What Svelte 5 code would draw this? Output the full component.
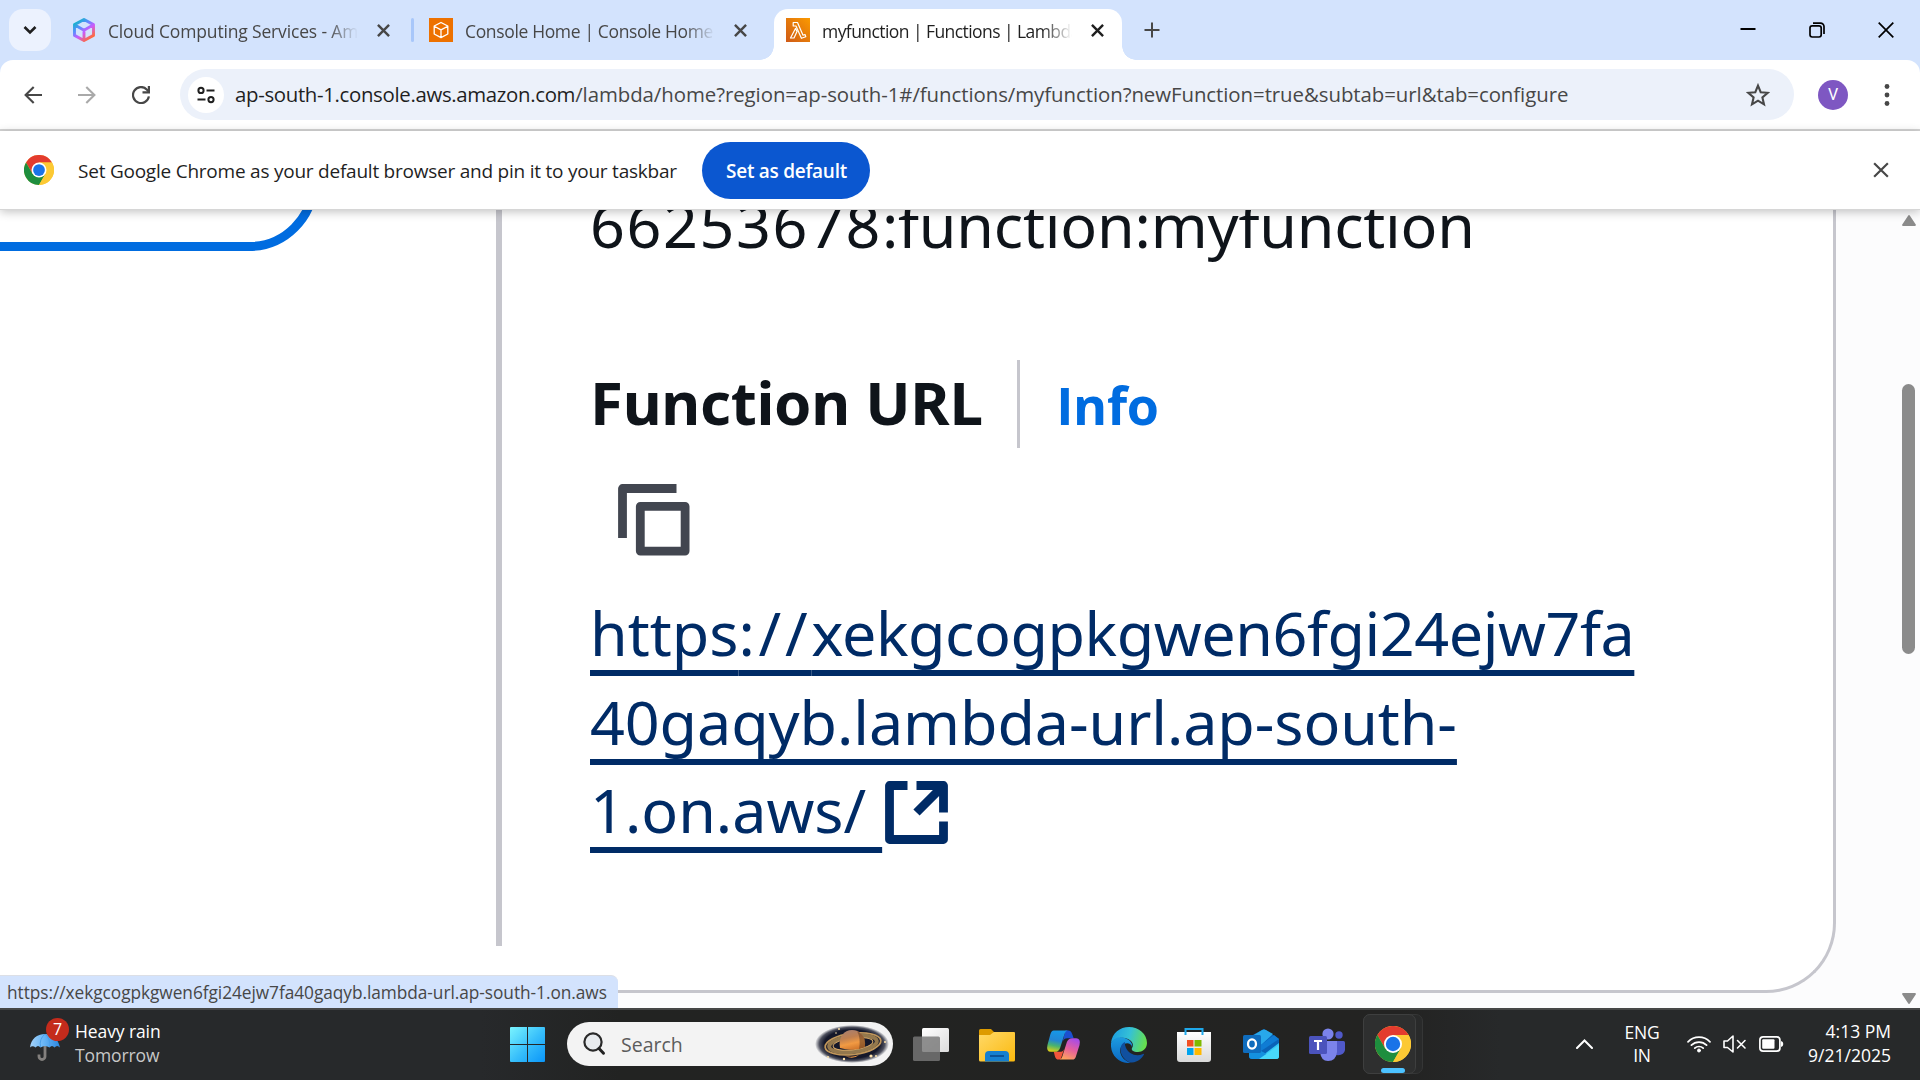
<script>
  const tabs = [
    { id: 'cloud', title: 'Cloud Computing Services - Amazon' },
    { id: 'console', title: 'Console Home | Console Home' },
    { id: 'lambda', title: 'myfunction | Functions | Lambda', active: true }
  ];
</script>

{#snippet cross(cls)}
  <svg class={cls} viewBox="0 0 14 14"><path d="M1 1 13 13M13 1 1 13" fill="none" stroke="currentColor" /></svg>
{/snippet}

{#snippet chrome(cls, ring)}
  <svg class={cls} viewBox="0 0 48 48">
    <circle cx="24" cy="24" r="24" fill="#fcc934" />
    <path d="M3.2 12A24 24 0 0 1 44.8 12H24L13.6 30Z" fill="#e33b2e" />
    <path d="M3.2 12A24 24 0 0 0 24 48L34.4 30 24 34 13.6 30Z" fill="#1e8e3e" />
    <path d="M44.8 12H24L34.4 30 24 48A24 24 0 0 0 44.8 12Z" fill="#fcc934" />
    <circle cx="24" cy="24" r="12" fill="#fff" />
    <circle cx="24" cy="24" r={ring} fill="#1a73e8" />
  </svg>
{/snippet}

<div class="screen">
  <header class="strip">
    <button class="tab-search" aria-label="Search tabs">
      <svg width="14" height="10" viewBox="0 0 14 10"><path d="M1.5 2 7 7.5 12.500 2" fill="none" stroke="#1f1f1f" stroke-width="2.6" /></svg>
    </button>
    <div class="tabs">
      {#each tabs as tab, i (tab.id)}
        <div class="tab" class:active={tab.active}>
          {#if tab.id === 'cloud'}
            <svg class="fav" viewBox="0 0 24 24">
              <defs>
                <linearGradient id="cube" x1="0.1" y1="0" x2="0.8" y2="1">
                  <stop offset="0.05" stop-color="#12b5c9" /><stop offset="0.35" stop-color="#5b8cff" />
                  <stop offset="0.6" stop-color="#c85cff" /><stop offset="0.95" stop-color="#ff6a3d" />
                </linearGradient>
              </defs>
              <path d="M12 1.500 21.500 6.600V17.400L12 22.500 2.500 17.400V6.600ZM2.500 6.800 12 12.200 21.500 6.800M12 12.200V22" fill="none" stroke="url(#cube)" stroke-width="2.900" stroke-linejoin="round" />
            </svg>
          {:else if tab.id === 'console'}
            <svg class="fav" viewBox="0 0 24 24">
              <rect width="24" height="24" fill="#ed7100" />
              <path d="M12 4.500 18.800 8V16L12 19.600 5.200 16V8ZM5.200 8.200 12 11.900 18.800 8.200M12 11.900V19.500" fill="none" stroke="#fff" stroke-width="1.300" stroke-linejoin="round" />
            </svg>
          {:else}
            <svg class="fav" viewBox="0 0 24 24">
              <defs><linearGradient id="lam" x1="0" y1="1" x2="1" y2="0"><stop offset="0" stop-color="#cf5a17" /><stop offset="1" stop-color="#fb9a00" /></linearGradient></defs>
              <rect width="24" height="24" fill="url(#lam)" />
              <path d="M7.200 4.500H11.500L17 17.200 19 16.500 19.800 18.800 15.400 20.300 10 8H7.200ZM9.500 10.500 11 13.500 8 20H4.500Z" fill="none" stroke="#fff" stroke-width="1.200" stroke-linejoin="round" />
            </svg>
          {/if}
          <span class="title {tab.id}">{tab.title}</span>
          <button class="close" aria-label="Close tab">{@render cross('x-tab')}</button>
        </div>
        {#if i < tabs.length - 1}<span class="sep" class:shown={i === 0}></span>{/if}
      {/each}
    </div>
    <button class="new-tab" aria-label="New tab">
      <svg width="16" height="16" viewBox="0 0 16 16"><path d="M8 .5V15.500M.5 8H15.500" stroke="#474747" stroke-width="2" /></svg>
    </button>
    <div class="window-buttons">
      <svg width="16" height="16" viewBox="0 0 16 16"><path d="M.5 7H15.500" stroke="#000" stroke-width="2" /></svg>
      <svg width="16" height="16" viewBox="0 0 16 16" fill="none" stroke="#000" stroke-width="1.700"><rect x="1" y="3.800" width="11.200" height="11.200" rx="2.200" /><path d="M4 1.100H11.500A3.500 3.500 0 0 1 15 4.600V12" /></svg>
      <svg width="16" height="16" viewBox="0 0 16 16"><path d="M.7 .7 15.300 15.300M15.300 .7 .7 15.300" stroke="#000" stroke-width="1.700" /></svg>
    </div>
  </header>

  <div class="toolbar">
    <div class="nav">
      <svg width="18" height="18" viewBox="0 0 18 18" fill="none" stroke="#474747" stroke-width="2.100"><path d="M18 9H2M9.700 .9 1.600 9 9.700 17.100" /></svg>
      <svg width="18" height="18" viewBox="0 0 18 18" fill="none" stroke="#a9a9a9" stroke-width="2.100"><path d="M0 9H16M8.300 .9 16.400 9 8.300 17.100" /></svg>
      <svg width="18" height="18" viewBox="0 0 18 18" fill="none" stroke="#474747" stroke-width="2.200"><path d="M16.900 10.400A8 8 0 1 1 14.700 3.400L17 5.700" /><path d="M16.900 0V6.300H10.500" /></svg>
    </div>
    <div class="omnibox">
      <span class="site">
        <svg width="20" height="20" viewBox="0 0 20 20" fill="none" stroke="#1f1f1f" stroke-width="2"><circle cx="5" cy="5.400" r="2.600" /><path d="M10.500 5.400H18.500M1.500 14.600H9.500" /><circle cx="15" cy="14.600" r="2.600" /></svg>
      </span>
      <span class="url"><span class="host">ap-south-1.console.aws.amazon.com</span>/lambda/home?region=ap-south-1#/functions/myfunction?newFunction=true&amp;subtab=url&amp;tab=configure</span>
      <svg class="star" viewBox="0 0 24 24"><path d="M12 2.600 14.700 9.200 21.800 9.800 16.400 14.500 18 21.400 12 17.700 6 21.400 7.600 14.500 2.200 9.800 9.300 9.200Z" fill="none" stroke="#474747" stroke-width="2.100" /></svg>
    </div>
    <span class="avatar">V</span>
    <svg class="dots" width="6" height="24" viewBox="0 0 6 24" fill="#474747"><circle cx="3" cy="3.500" r="2.400" /><circle cx="3" cy="12" r="2.400" /><circle cx="3" cy="20.500" r="2.400" /></svg>
  </div>

  <div class="banner">
    {@render chrome('chrome-small', 9.4)}
    <span class="message">Set Google Chrome as your default browser and pin it to your taskbar</span>
    <button class="default">Set as default</button>
    <button class="dismiss" aria-label="Dismiss">{@render cross('x-banner')}</button>
  </div>

  <main class="page">
    <section class="card">
      <div class="left"><div class="outline-button"></div></div>
      <div class="right">
        <p class="arn"><span class="account">66253678</span>:function:myfunction</p>
        <div class="heading"><h2>Function URL</h2><a class="info" href="#info">Info</a></div>
        <svg class="copy" viewBox="0 0 72 72" fill="none" stroke="#424650" stroke-width="8.800" stroke-linejoin="round"><path d="M58.500 4.500H4.500V54" /><rect x="22.300" y="22.400" width="44.800" height="44.700" /></svg>
        <a class="link" href="#url">https<span class="slashes">://</span><span class="first">xekgcogpkgwen6fgi24ejw7fa</span><br /><span class="second">40gaqyb.lambda-url.ap-south-</span><br />1.on.aws/&nbsp;<svg class="external" viewBox="0 0 63 63" fill="none" stroke="#002b66" stroke-width="8.800" stroke-linejoin="round"><path d="M22.500 4.500H4.500V58.500H58.500V40.500M31.500 4.500H58.500V31.500M58.500 4.500 31.500 31.500" /></svg></a>
      </div>
    </section>
    <aside class="scrollbar">
      <svg width="14" height="11" viewBox="0 0 14 11"><path d="M7 1 13 10H1Z" fill="#8b8b8b" stroke="#8b8b8b" stroke-width="1.800" stroke-linejoin="round" /></svg>
      <span class="thumb"></span>
      <svg width="14" height="11" viewBox="0 0 14 11"><path d="M7 10 13 1H1Z" fill="#8b8b8b" stroke="#8b8b8b" stroke-width="1.800" stroke-linejoin="round" /></svg>
    </aside>
    <div class="status">https://xekgcogpkgwen6fgi24ejw7fa40gaqyb.lambda-url.ap-south-1.on.aws</div>
  </main>

  <footer class="taskbar">
    <div class="weather">
      <div class="weather-icon">
        <svg width="32" height="32" viewBox="0 0 32 32">
          <defs><linearGradient id="umb"><stop offset="0" stop-color="#a4d3fb" /><stop offset="0.5" stop-color="#63b2f5" /><stop offset="1" stop-color="#2b86dd" /></linearGradient></defs>
          <path d="M16 14V25.500A3 3 0 0 1 10 25.500V23.500" fill="none" stroke="#83807e" stroke-width="2.800" />
          <path d="M1 16.500C2 8 8 3 16 3S29 8 31 16.500Q28 13.500 25.500 16.500 23 13.500 20.500 16.500 16 13.500 11.500 16.500 9 13.500 6.500 16.500 3.500 14 1 16.500Z" fill="url(#umb)" />
          <path d="M16 3Q10 8 11.500 16M16 3Q22 8 20.500 16" fill="none" stroke="#4a9fe9" stroke-width="1" />
        </svg>
        <span class="badge">7</span>
      </div>
      <div class="lines"><span>Heavy rain</span><span class="dim">Tomorrow</span></div>
    </div>

    <div class="apps">
      <svg class="start" viewBox="0 0 35 35">
        <defs><linearGradient id="win" x1="0" y1="0" x2="1" y2="1"><stop offset="0" stop-color="#7af4fe" /><stop offset="0.55" stop-color="#35bdfb" /><stop offset="1" stop-color="#0a95f8" /></linearGradient></defs>
        <path d="M1 0H17V17H0V1A1 1 0 0 1 1 0ZM18 0H34A1 1 0 0 1 35 1V17H18ZM0 18H17V35H1A1 1 0 0 1 0 34ZM18 18H35V34A1 1 0 0 1 34 35H18Z" fill="url(#win)" />
      </svg>
      <div class="search">
        <svg width="23" height="24" viewBox="0 0 23 24"><circle cx="10" cy="10" r="8.600" fill="#e8ebee" stroke="#2a2a2a" stroke-width="2.200" /><path d="M16 16.500 20.500 21.200" stroke="#222" stroke-width="3" stroke-linecap="round" /></svg>
        <span>Search</span>
        <svg class="saturn" viewBox="0 0 74 38">
          <defs>
            <radialGradient id="glow"><stop offset="0.75" stop-color="#15182a" /><stop offset="0.88" stop-color="#15182a" stop-opacity="0.750" /><stop offset="1" stop-color="#15182a" stop-opacity="0" /></radialGradient>
            <linearGradient id="planet" x1="0.2" y1="0" x2="0.5" y2="1"><stop offset="0" stop-color="#a87f70" /><stop offset="0.4" stop-color="#bf7f50" /><stop offset="0.7" stop-color="#f19a43" /><stop offset="1" stop-color="#d2772c" /></linearGradient>
          </defs>
          <ellipse cx="37" cy="19" rx="37" ry="19" fill="url(#glow)" />
          <g transform="rotate(-7 37 19)" fill="none">
            <ellipse cx="38" cy="19" rx="28" ry="10.500" stroke="#c0965a" stroke-width="1.800" />
            <ellipse cx="38" cy="19" rx="24" ry="8" stroke="#94784d" stroke-width="4" />
            <ellipse cx="38" cy="19" rx="20" ry="6" stroke="#d8aa68" stroke-width="1" />
          </g>
          <path d="M25 23C23 12 29 5 37 5S51 11 50 22Q38 27 25 23Z" fill="url(#planet)" />
          <path d="M42 6Q48 9 50 15V22L44 24Q46 13 42 6Z" fill="#6d4526" opacity="0.600" />
          <path d="M30 31Q37 33 44 30Q38 35 30 31Z" fill="#f19a43" />
          <g fill="#ffe4ad"><circle cx="24" cy="4" r="1" /><circle cx="21" cy="8" r="0.800" /><circle cx="29" cy="34" r="1.200" /><circle cx="56" cy="31" r="1.600" /><circle cx="61" cy="31" r="1" /><circle cx="13" cy="32" r="1" /><circle cx="70" cy="17" r="1" /></g>
        </svg>
      </div>
      <svg class="taskview" viewBox="0 0 36 35">
        <defs><linearGradient id="tv" x1="0" y1="0" x2="1" y2="1"><stop offset="0" stop-color="#fff" /><stop offset="1" stop-color="#dcdcdc" /></linearGradient></defs>
        <rect x="9" y="1" width="27" height="24" rx="1.500" fill="url(#tv)" /><rect x="0" y="9.500" width="27" height="24.500" rx="1.500" fill="#777" opacity="0.820" />
      </svg>
      <svg class="folder" viewBox="0 0 36 36">
        <defs><linearGradient id="fold" x1="0" y1="0" x2="1" y2="1"><stop offset="0" stop-color="#ffd968" /><stop offset="1" stop-color="#fbb90e" /></linearGradient></defs>
        <path d="M0 3.500A1.500 1.500 0 0 1 1.500 2H12L15 5V12H0Z" fill="#dd9b00" />
        <path d="M0 8H11L15 5H35A1 1 0 0 1 36 6V33A1.500 1.500 0 0 1 34.500 34.500H1.500A1.500 1.500 0 0 1 0 33Z" fill="url(#fold)" />
        <path d="M6 34.500V28A4 4 0 0 1 10 24H26A4 4 0 0 1 30 28V34.500Z" fill="#1580d0" /><path d="M11 29H25" stroke="#0b4f91" stroke-width="1.800" />
      </svg>
      <svg class="copilot" viewBox="0 0 36 34">
        <defs>
          <linearGradient id="cpA" x1="0.4" y1="0" x2="0.2" y2="1"><stop offset="0" stop-color="#1698e8" /><stop offset="0.45" stop-color="#2386d4" /><stop offset="0.7" stop-color="#4ab36e" /><stop offset="1" stop-color="#e5d112" /></linearGradient>
          <linearGradient id="cpB" x1="0.7" y1="0" x2="0.3" y2="1"><stop offset="0" stop-color="#a64be8" /><stop offset="0.5" stop-color="#e6609c" /><stop offset="1" stop-color="#ffa45a" /></linearGradient>
        </defs>
        <path d="M20 2H23Q26 2 27 6L28.500 10H22Q18 10 17 14Z" fill="#1c4fd0" />
        <path d="M15 32H13Q10 32 9 28L8 24H14Q18 24 19 20Z" fill="#f2553c" />
        <path d="M8 2H23Q20 2 19 6L14.500 20Q13 24 9 24H5Q0 24 1.500 17L4.500 6Q5.500 2 8 2Z" fill="url(#cpA)" />
        <path d="M27 10H31Q36 10 34.500 17L31 28Q30 32 27 32H13Q16 32 17 28L21.500 14Q23 10 27 10Z" fill="url(#cpB)" />
      </svg>
      <svg class="edge" viewBox="0 0 36 36">
        <defs>
          <linearGradient id="edA" x1="0" y1="0.3" x2="1" y2="0.5"><stop offset="0" stop-color="#1b9de2" /><stop offset="0.5" stop-color="#35c1d6" /><stop offset="1" stop-color="#67e04b" /></linearGradient>
          <linearGradient id="edB" x1="0" y1="0" x2="0" y2="1"><stop offset="0" stop-color="#1c9be0" /><stop offset="1" stop-color="#0b67c2" /></linearGradient>
        </defs>
        <path d="M0 16C1 6 9 0 18 0C28 0 36 7 36 16C36 22 31 25 27 25C22 25 20 23 21 21C23 19 22 14 17 12C10 9 3 12 0 16Z" fill="url(#edA)" />
        <path d="M0 16C3 10 10 9 16 12C20 14 22 17 21 20C20 15 13 15 10 20C7 26 12 34 20 36C9 37-1 29 0 16Z" fill="url(#edB)" />
        <path d="M14 15C9 17 8 24 12 30C15 34 19 36 21 35.500C27 35 31 31 33 27.500Q33 26.500 32 27C25 30 18 27 15 21Q13.500 18 14 15Z" fill="#10509f" />
      </svg>
      <svg class="store" viewBox="0 0 36 36">
        <defs><linearGradient id="bag" x1="0" y1="0" x2="0" y2="1"><stop offset="0" stop-color="#fff" /><stop offset="1" stop-color="#d9d9d9" /></linearGradient></defs>
        <path d="M1 5H35V32A3 3 0 0 1 32 35H4A3 3 0 0 1 1 32Z" fill="url(#bag)" /><path d="M9.500 8V2H26.500V8" fill="none" stroke="#1fa8ea" stroke-width="2" />
        <path d="M11 13H17.500V19.500H11Z" fill="#f25022" /><path d="M18.500 13H25.500V19.500H18.500Z" fill="#7fba00" /><path d="M11 21H17.500V28H11Z" fill="#00a4ef" /><path d="M18.500 21H25.500V28H18.500Z" fill="#ffb900" />
      </svg>
      <svg class="outlook" viewBox="0 0 36 34">
        <path d="M6 9 21 1 36 11V28A3 3 0 0 1 33 31H9A3 3 0 0 1 6 28Z" fill="#0a63b8" /><path d="M6 10 19 2Q21 1 23 2L30 6 18 17H6Z" fill="#28a8ea" /><path d="M18 17 31 7 36 11 18 23Z" fill="#0f7cd4" /><path d="M36 15V28A3 3 0 0 1 33 31H15Z" fill="#35c8f4" /><path d="M6 22 18 23 34 31H9A3 3 0 0 1 6 28Z" fill="#1490df" /><path d="M16 31 36 17V28A3 3 0 0 1 33 31Z" fill="#48d8fb" />
        <rect y="7" width="18" height="18" rx="1.500" fill="#0f6cbd" /><ellipse cx="9" cy="16" rx="4" ry="4.600" fill="none" stroke="#fff" stroke-width="2.300" />
      </svg>
      <svg class="teams" viewBox="0 0 36 36">
        <circle cx="19" cy="7" r="5.600" fill="#7b83eb" /><circle cx="30" cy="8" r="3.700" fill="#5059c9" /><path d="M26 14H34.500A1.500 1.500 0 0 1 36 15.500V23Q35 29 27 28Z" fill="#5059c9" /><path d="M11 14H28V25Q27 34 19 34Q12 34 11 25Z" fill="#7b83eb" />
        <rect y="9" width="18" height="18" rx="1.500" fill="#4b53bc" /><path d="M5 14H13M9 14V23" stroke="#fff" stroke-width="2.200" />
      </svg>
      <div class="running"><div class="tile">{@render chrome('chrome-big', 9.6)}<span class="indicator"></span></div></div>
    </div>

    <div class="tray">
      <svg class="caret" viewBox="0 0 17 10"><path d="M1 9 8.500 1.500 16 9" fill="none" stroke="#fff" stroke-width="2" stroke-linecap="round" /></svg>
      <div class="lang"><span>ENG</span><span>IN</span></div>
      <svg class="wifi" viewBox="0 0 24 18" fill="none" stroke="#fff" stroke-width="1.700" stroke-linecap="round"><path d="M1 6.800A15.500 15.500 0 0 1 23 6.800M4.400 10.200A10.700 10.700 0 0 1 19.600 10.200M7.800 13.200A6 6 0 0 1 16.200 13.200" /><circle cx="12" cy="15.500" r="1.500" fill="#fff" stroke-width="1" /></svg>
      <svg class="sound" viewBox="0 0 24 18" fill="none" stroke="#fff" stroke-width="1.600" stroke-linejoin="round" stroke-linecap="round"><path d="M1 6H4.500L10 1V17L4.500 12.500H1Z" /><path d="M14.500 5.500 22 13M22 5.500 14.500 13" /></svg>
      <svg class="battery" viewBox="0 0 25 16"><rect x="0.900" y="0.900" width="20" height="14.200" rx="3.200" fill="none" stroke="#fff" stroke-width="1.700" /><rect x="3.200" y="3.200" width="12.300" height="9.600" rx="1" fill="#fff" /><path d="M22 5V11Q24.300 10.500 24.300 8T22 5Z" fill="#fff" /></svg>
      <div class="clock"><span>4:13 PM</span><span>9/21/2025</span></div>
    </div>
  </footer>
</div>

<style>
  :global(body) { margin: 0; background: #fff; }
  .screen { width: 1920px; height: 1080px; display: flex; flex-direction: column; overflow: hidden; font-family: "Open Sans", "Noto Sans", sans-serif; color: #1f1f1f; background: #d3e3fd; }
  svg { display: block; flex: none; }
  button { border: 0; background: none; padding: 0; font: inherit; color: inherit; display: flex; align-items: center; justify-content: center; flex: none; }
  span { white-space: nowrap; }

  /* tab strip */
  .strip { height: 60px; flex: none; display: flex; align-items: center; box-sizing: border-box; padding-left: 9px; }
  .tab-search { width: 42px; height: 42px; border-radius: 14px; background: #ecf2fe; margin-right: 9px; }
  .tabs { display: flex; height: 60px; }
  .tab { position: relative; width: 348px; height: 60px; display: flex; align-items: center; box-sizing: border-box; padding-left: 12px; color: #474747; }
  .fav { width: 24px; height: 24px; }
  .title { width: 250px; margin: 1px 0 0 12px; overflow: hidden; font-size: 17.500px; line-height: 24px; mask-image: linear-gradient(90deg, #000 220px, transparent 250px); }
  .cloud { letter-spacing: -0.160px; }
  .console { letter-spacing: -0.350px; }
  .lambda { letter-spacing: -0.570px; color: #1f1f1f; }
  .close { width: 28px; height: 28px; margin-left: 11.500px; }
  .x-tab { width: 13px; height: 13px; stroke-width: 2.600; }
  .sep { width: 3px; height: 24px; margin: 18px 3px; }
  .sep.shown { background: #a8c7fa; border-radius: 2px; }
  .active::before { content: ""; position: absolute; inset: 9px 0 0; z-index: 0; background: #fff; border-radius: 14px 14px 0 0; }
  .active::after { content: ""; position: absolute; left: -14px; right: -14px; bottom: 0; height: 14px; background: radial-gradient(circle at 0 0, transparent 13.500px, #fff 14px) left / 14px 14px no-repeat, radial-gradient(circle at 100% 0, transparent 13.500px, #fff 14px) right / 14px 14px no-repeat; }
  .active > * { position: relative; z-index: 1; }
  .active .close { color: #1f1f1f; }
  .new-tab { width: 42px; height: 42px; margin-left: 9px; }
  .window-buttons { margin-left: auto; display: flex; gap: 53px; padding-right: 26.500px; }

  /* toolbar */
  .toolbar { height: 71px; flex: none; box-sizing: border-box; display: flex; align-items: center; padding: 0 30px 0 24px; background: #fff; border-bottom: 2px solid #d4d4d4; border-radius: 13px 13px 0 0; }
  .nav { display: flex; gap: 36px; margin-right: 30px; padding-top: 1px; }
  .omnibox { width: 1614px; height: 51px; border-radius: 26px; background: #ecf1fa; display: flex; align-items: center; box-sizing: border-box; padding: 0 24px 0 8px; }
  .site { width: 36px; height: 36px; border-radius: 50%; background: #fff; display: flex; align-items: center; justify-content: center; margin-right: 11px; }
  .url { flex: 1; font-size: 20.400px; line-height: 28px; letter-spacing: -0.055px; color: #474747; padding-bottom: 1px; }
  .host { letter-spacing: -0.330px; color: #1f1f1f; }
  .star { width: 24px; height: 24px; }
  .avatar { width: 30px; height: 30px; border-radius: 50%; background: #7e57c2; color: #fff; display: flex; align-items: center; justify-content: center; font: 16px/30px Roboto, sans-serif; margin: 1px 36px 0 24px; }

  /* default-browser banner */
  .banner { height: 79px; flex: none; position: relative; z-index: 2; box-sizing: border-box; display: flex; align-items: center; padding: 0 31px 0 24px; background: #fff; border-bottom: 1px solid #d6d6d6; box-shadow: 0 2px 9px rgba(0, 0, 0, 0.240); }
  .chrome-small { width: 30px; height: 30px; }
  .message { width: 600px; margin: 1px 24px 0; font-size: 19px; letter-spacing: -0.230px; }
  .default { width: 168px; height: 57px; box-sizing: border-box; padding: 2px 0 0 1px; border-radius: 28.500px; background: #0b57d0; color: #fff; font-size: 19px; font-weight: 600; letter-spacing: -0.270px; }
  .dismiss { margin-left: auto; color: #474747; }
  .x-banner { width: 16px; height: 16px; stroke-width: 1.900; }

  /* page */
  .page { position: relative; height: 798px; flex: none; display: flex; justify-content: space-between; background: #fcfcfd; overflow: hidden; font-family: "Noto Sans", "Open Sans", sans-serif; }
  .card { width: 1836px; height: 783px; box-sizing: border-box; border: solid #c6c6cd; border-width: 0 3px 3px 0; border-bottom-right-radius: 70px; background: #fff; display: flex; }
  .left { width: 496px; }
  .outline-button { width: 318px; height: 41px; box-sizing: border-box; overflow: hidden; position: relative; }
  .outline-button::after { content: ""; position: absolute; right: 0; bottom: 0; width: 400px; height: 150px; box-sizing: border-box; border: 9px solid #006ce0; border-radius: 69px; }
  .right { height: 736px; box-sizing: border-box; border-left: 6px solid #c6c6cd; padding-left: 88px; display: flex; flex-direction: column; align-items: flex-start; color: #0f141a; }
  .arn { margin: -29px 0 91px; font-size: 61px; line-height: 88.400px; letter-spacing: -0.200px; }
  .account { letter-spacing: 1.600px; }
  .heading { height: 88px; display: flex; align-items: center; }
  h2 { margin: -4px 0 0; font-size: 60px; line-height: 88px; font-weight: 700; letter-spacing: -0.300px; padding-right: 34.500px; }
  .info { height: 88px; box-sizing: border-box; border-left: 3px solid #c6c6cd; padding-left: 36px; font: 700 52px/90px "Open Sans", sans-serif; letter-spacing: -0.300px; color: #006ce0; text-decoration: none; }
  .copy { width: 72px; height: 72px; margin: 36px 0 33px 28px; }
  .link { font-size: 61px; line-height: 88.400px; color: #002b66; white-space: nowrap; text-decoration: underline; text-decoration-thickness: 6px; text-underline-offset: 14px; text-decoration-skip-ink: none; }
  .slashes { letter-spacing: 3.700px; }
  .first { letter-spacing: -0.440px; }
  .second { letter-spacing: -0.090px; }
  .external { display: inline-block; width: 63px; height: 63px; vertical-align: -11px; margin-left: 3px; }
  .scrollbar { width: 18px; height: 798px; padding: 5px 5px 4px 0; box-sizing: border-box; display: flex; flex-direction: column; align-items: center; }
  .scrollbar > :last-child { margin-top: auto; }
  .thumb { width: 13px; height: 270px; margin-top: 158px; border-radius: 7px; background: #8b8b8b; }
  .status { position: absolute; left: 0; bottom: 0; width: 618px; height: 33px; box-sizing: border-box; padding-left: 7px; background: #d3e3fd; border-top: 1px solid #dcdfe6; border-top-right-radius: 7px; color: #474747; font: 17.300px/33px "Open Sans", sans-serif; letter-spacing: -0.050px; white-space: nowrap; }

  /* taskbar */
  .taskbar { height: 72px; flex: none; box-sizing: border-box; border-top: 2px solid #464747; background: linear-gradient(90deg, #27292b 0, #27292b 480px, #222322 620px, #232322 1400px, #27292a 1500px); display: flex; align-items: center; color: #fff; font-size: 17.500px; line-height: 24px; }
  .weather { width: 510px; display: flex; align-items: center; box-sizing: border-box; padding-left: 29px; }
  .weather-icon { position: relative; width: 46px; padding-top: 3px; }
  .badge { position: absolute; left: 17px; top: -10px; width: 23px; height: 23px; border-radius: 50%; background: #c42b1c; font-size: 16px; line-height: 23px; text-align: center; }
  .lines, .lang, .clock { display: flex; flex-direction: column; margin-top: -5px; }
  .lines { letter-spacing: -0.100px; }
  .dim { color: #c8c8c8; }
  .apps { display: flex; align-items: center; height: 70px; }
  .start { width: 35px; height: 35px; margin-right: 22px; }
  .search { width: 326px; height: 44px; border-radius: 22px; background: #f3f3f3; box-sizing: border-box; padding: 0 4px 0 16px; display: flex; align-items: center; margin: -2px 20px 0 0; color: #5c5c5c; font-size: 19.500px; }
  .search span { margin: 1px 0 0 15px; }
  .saturn { width: 74px; height: 38px; margin-left: auto; }
  .taskview { width: 36px; height: 35px; margin-right: 30px; }
  .folder { width: 36px; height: 36px; margin-right: 30.500px; }
  .copilot { width: 35px; height: 34px; margin-right: 30.500px; }
  .edge { width: 36px; height: 36px; margin-right: 29px; }
  .store { width: 36px; height: 36px; margin-right: 31px; }
  .outlook { width: 36px; height: 34px; margin-right: 30px; }
  .teams { width: 36px; height: 36px; margin-right: 18px; }
  .apps > svg { margin-top: -1px; }
  .running { width: 60px; height: 60px; margin-top: -2px; box-sizing: border-box; border: 1px solid #353636; border-radius: 7px; background: #292a2a; }
  .tile { width: 53px; height: 60px; margin: -1px; box-sizing: border-box; border: 1px solid #3e3f3f; border-radius: 7px; background: #2e2f2f; display: flex; flex-direction: column; align-items: center; padding-top: 11px; }
  .chrome-big { width: 36px; height: 36px; margin-left: 7px; }
  .indicator { width: 24px; height: 5px; border-radius: 3px; background: #4cc2ff; margin: 6px 0 0 7px; }
  .tray { margin-left: auto; display: flex; align-items: center; padding-right: 29px; }
  .caret { width: 17px; height: 10px; margin: -3px 31px 0 0; }
  .lang { width: 36px; align-items: center; line-height: 23px; margin-right: 27px; margin-top: -2px; letter-spacing: -0.200px; }
  .wifi { width: 24px; height: 18px; margin: -2px 12px 0 0; }
  .sound { width: 24px; height: 18px; margin: -2px 12px 0 0; }
  .battery { width: 25px; height: 16px; margin: -2px 23px 0 0; }
  .clock { width: 84px; align-items: flex-end; }
</style>
